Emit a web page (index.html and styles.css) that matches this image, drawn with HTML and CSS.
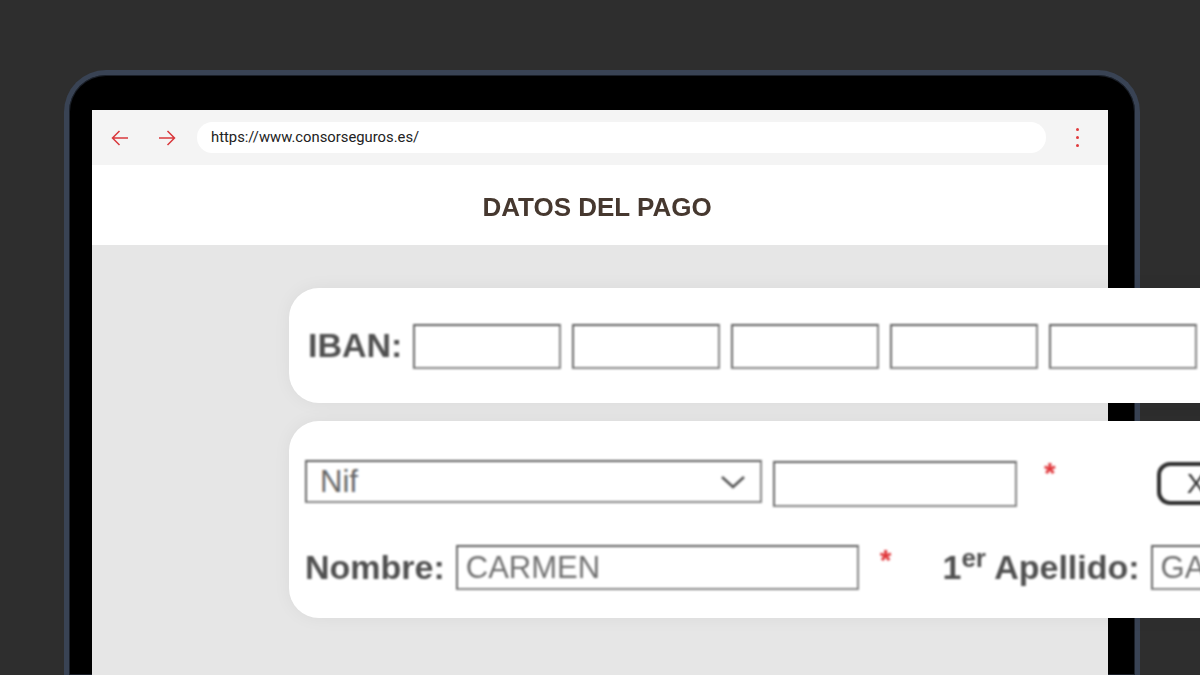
FILE: index.html
```html
<!DOCTYPE html>
<html lang="es">
<head>
    <meta charset="UTF-8">
    <meta name="viewport" content="width=device-width, initial-scale=1.0">
    <title>Datos del pago</title>
    <link rel="stylesheet" href="styles.css">
</head>
<body>
    <div class="laptop">
        <div class="screen">
            <!-- Browser toolbar -->
            <div class="browser-bar">
                <svg class="nav-arrow back" width="18" height="16" viewBox="0 0 18 16">
                    <path d="M17 8H1.5M8.5 1L1.5 8l7 7" fill="none" stroke="#d9383c" stroke-width="1.5"/>
                </svg>
                <svg class="nav-arrow forward" width="18" height="16" viewBox="0 0 18 16">
                    <path d="M1 8h15.5M9.5 1l7 7-7 7" fill="none" stroke="#d9383c" stroke-width="1.5"/>
                </svg>
                <div class="url-pill">https://www.consorseguros.es/</div>
                <div class="menu-dots">
                    <span></span><span></span><span></span>
                </div>
            </div>

            <!-- Page title -->
            <div class="page-header">
                <h1>DATOS DEL PAGO</h1>
            </div>

            <div class="page-body">
                <!-- IBAN card -->
                <div class="card card-iban">
                    <div class="form-row">
                        <label class="field-label">IBAN:</label>
                        <input class="field iban-field" type="text">
                        <input class="field iban-field" type="text">
                        <input class="field iban-field" type="text">
                        <input class="field iban-field" type="text">
                        <input class="field iban-field" type="text">
                    </div>
                </div>

                <!-- Holder card -->
                <div class="card card-holder">
                    <div class="form-row row-doc">
                        <div class="field select-field">
                            <span>Nif</span>
                            <svg width="26" height="14" viewBox="0 0 26 14">
                                <path d="M2 2l11 10L24 2" fill="none" stroke="#555" stroke-width="2.6"/>
                            </svg>
                        </div>
                        <input class="field doc-field" type="text">
                        <span class="required">*</span>
                        <button class="clear-btn" type="button">X</button>
                    </div>
                    <div class="form-row row-name">
                        <label class="field-label">Nombre:</label>
                        <input class="field name-field" type="text" value="CARMEN">
                        <span class="required">*</span>
                        <label class="field-label surname-label">1<sup>er</sup> Apellido:</label>
                        <input class="field surname-field" type="text" value="GARCIA">
                    </div>
                </div>
            </div>
        </div>
    </div>
</body>
</html>
```

FILE: styles.css
```css
/* General Styles */
body {
    margin: 0;
    padding: 0;
    height: 675px;
    overflow: hidden;
    background-color: #2e2e2e;
    font-family: 'Liberation Sans', Arial, sans-serif;
}

/* Laptop frame */
.laptop {
    box-sizing: border-box;
    width: 1076px;
    height: 605px;
    margin: 70px 0 0 64px;
    padding: 35px 27px 0 23px;
    background-color: #000;
    border: 5px solid #394354;
    border-bottom: none;
    border-radius: 42px 42px 0 0;
    box-shadow: inset 0 0 0 1px #1b2029;
}

.screen {
    height: 100%;
    display: flex;
    flex-direction: column;
    background-color: #e6e6e6;
}

/* Browser toolbar */
.browser-bar {
    height: 55px;
    flex-shrink: 0;
    display: flex;
    align-items: center;
    padding-left: 19px;
    background-color: #f4f4f4;
}

.nav-arrow.back {
    margin-right: 29px;
}

.nav-arrow.forward {
    margin-right: 21px;
}

.url-pill {
    flex: 1;
    height: 31px;
    line-height: 31px;
    padding-left: 14px;
    background-color: #fff;
    border-radius: 16px;
    font-family: Roboto, 'Noto Sans', sans-serif;
    font-size: 14.8px;
    color: #222;
}

.menu-dots {
    width: 62px;
    display: flex;
    flex-direction: column;
    align-items: center;
    gap: 5px;
}

.menu-dots span {
    width: 3px;
    height: 3px;
    border-radius: 50%;
    background-color: #e03a3c;
}

/* Page title */
.page-header {
    height: 80px;
    flex-shrink: 0;
    display: flex;
    align-items: center;
    justify-content: center;
    background-color: #fff;
}

.page-header h1 {
    margin: 0 6px 0 0;
    padding-top: 4px;
    font-size: 26px;
    font-weight: bold;
    color: #46382f;
    filter: blur(0.5px);
}

/* Form cards */
.page-body {
    flex: 1;
    padding-top: 43px;
}

.card {
    width: 1000px;
    margin-left: 197px;
    background-color: #fff;
    border-radius: 30px;
    box-shadow: 0 0 18px rgba(0, 0, 0, 0.05);
}

.card-iban {
    box-sizing: border-box;
    height: 115px;
    display: flex;
    align-items: center;
    padding-left: 19px;
    margin-bottom: 18px;
}

.card-holder {
    box-sizing: border-box;
    height: 197px;
    padding: 39px 0 0 16px;
}

.form-row {
    display: flex;
    align-items: center;
    filter: blur(0.9px);
}

.field-label {
    font-size: 34px;
    font-weight: bold;
    color: #505050;
    margin-right: 11px;
    white-space: nowrap;
}

.field-label sup {
    font-size: 26px;
    line-height: 0;
}

.field {
    box-sizing: border-box;
    background-color: #fff;
    border: 2px solid #858585;
    border-top-color: #5e5e5e;
    border-left-color: #6a6a6a;
    font-family: 'Liberation Sans', Arial, sans-serif;
    font-size: 31px;
    color: #707070;
    padding: 0 8px;
    outline: none;
}

.iban-field {
    width: 148px;
    height: 45px;
    margin-right: 11px;
    margin-top: 2px;
}

/* Document row */
.row-doc {
    align-items: flex-start;
    height: 47px;
}

.select-field {
    width: 457px;
    height: 43px;
    display: flex;
    align-items: center;
    justify-content: space-between;
    padding: 0 14px 0 13px;
    color: #666;
}

.doc-field {
    width: 244px;
    height: 46px;
    margin: 1px 0 0 11px;
}

.required {
    font-size: 30px;
    font-weight: bold;
    line-height: 1;
    color: #e0363a;
    margin-top: -2px;
}

.row-doc .required {
    margin-left: 27px;
}

.clear-btn {
    box-sizing: border-box;
    height: 43px;
    width: 120px;
    margin: 2px 0 0 101px;
    padding: 0 0 0 26px;
    text-align: left;
    background-color: #fff;
    border: 4px solid #2f2f2f;
    border-radius: 13px;
    font-family: 'Liberation Sans', Arial, sans-serif;
    font-size: 28px;
    color: #333;
}

/* Name row */
.row-name {
    margin-top: 38px;
}

.name-field {
    width: 403px;
    height: 45px;
}

.row-name .required {
    align-self: flex-start;
    margin-left: 21px;
    margin-top: 0;
}

.surname-label {
    margin-left: 51px;
    margin-right: 11px;
}

.surname-field {
    width: 300px;
    height: 45px;
}
```
